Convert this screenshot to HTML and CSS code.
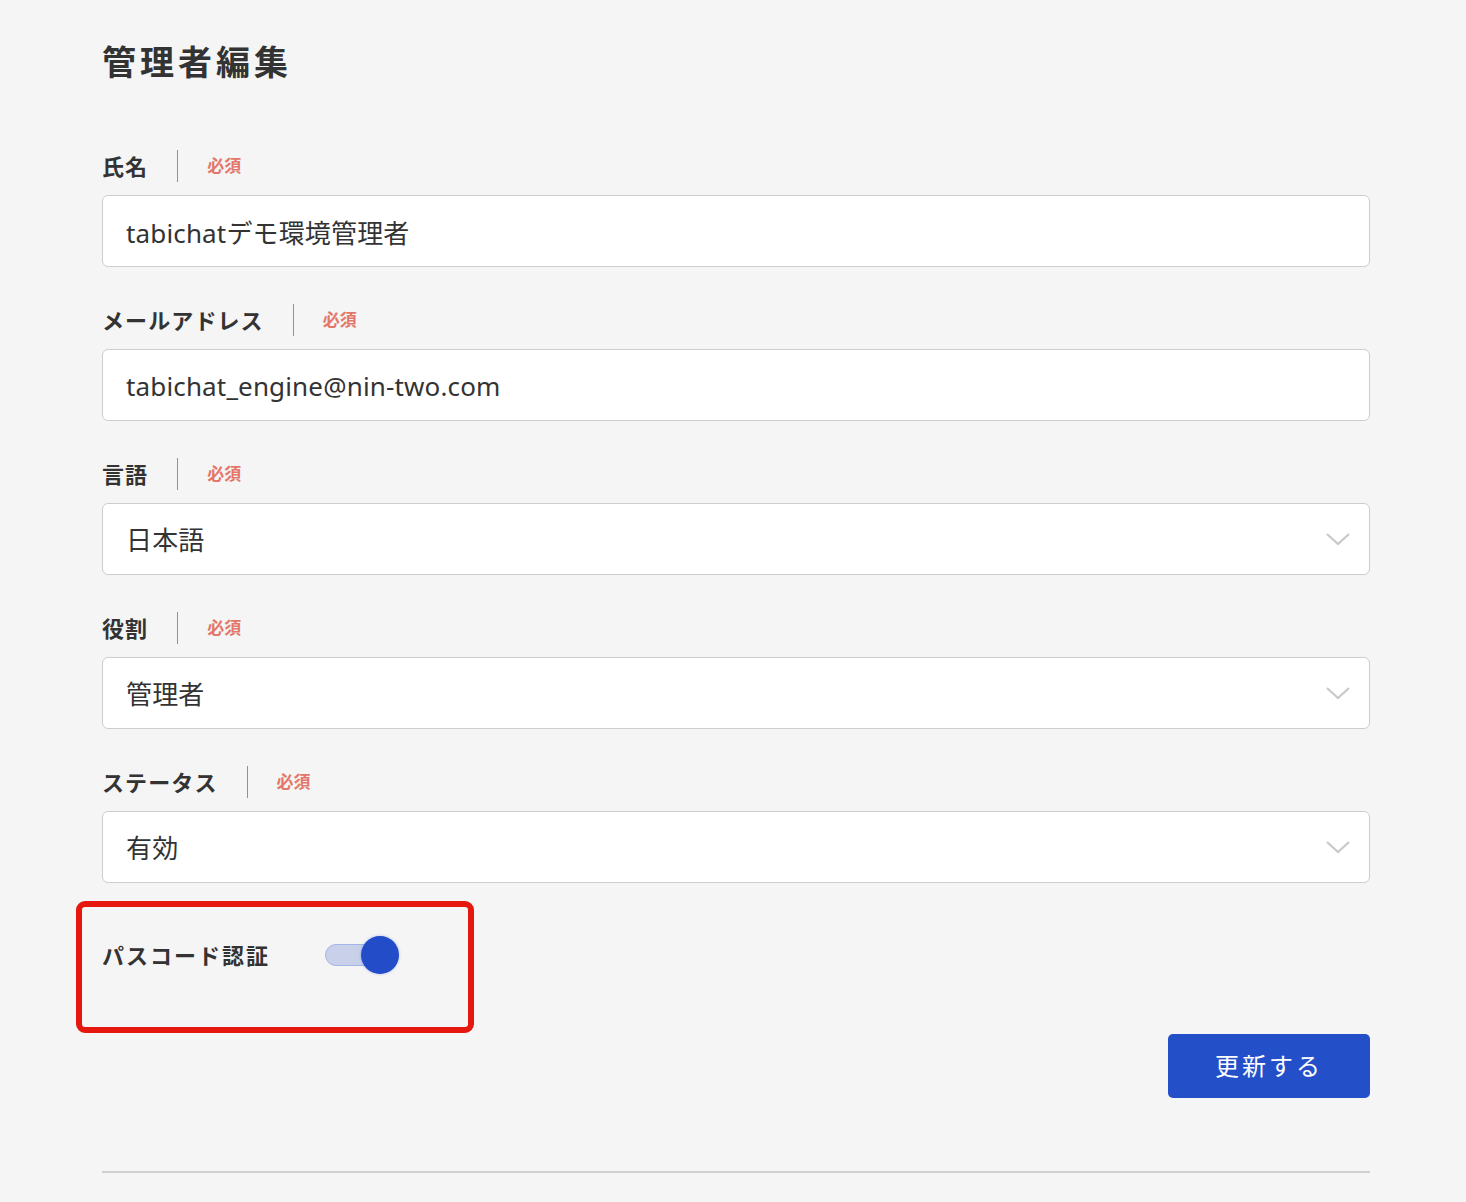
FILE: index.html
```html
<!DOCTYPE html>
<html lang="ja">
<head>
  <meta charset="UTF-8">
  <meta name="viewport" content="width=device-width, initial-scale=1">
  <title>管理者編集</title>
  <link rel="stylesheet" href="styles.css">
</head>
<body>
  <div class="page">
    <h1 class="title">管理者編集</h1>

    <div class="field">
      <div class="label-row">
        <span class="label">氏名</span>
        <span class="sep"></span>
        <span class="required">必須</span>
      </div>
      <div class="input">tabichatデモ環境管理者</div>
    </div>

    <div class="field">
      <div class="label-row">
        <span class="label">メールアドレス</span>
        <span class="sep"></span>
        <span class="required">必須</span>
      </div>
      <div class="input">tabichat_engine@nin-two.com</div>
    </div>

    <div class="field">
      <div class="label-row">
        <span class="label">言語</span>
        <span class="sep"></span>
        <span class="required">必須</span>
      </div>
      <div class="input select">
        <span>日本語</span>
        <svg class="chevron" width="26" height="16" viewBox="0 0 26 16"><polyline points="2,3 13,13 24,3" fill="none" stroke="#c9c9c9" stroke-width="2.2"/></svg>
      </div>
    </div>

    <div class="field">
      <div class="label-row">
        <span class="label">役割</span>
        <span class="sep"></span>
        <span class="required">必須</span>
      </div>
      <div class="input select">
        <span>管理者</span>
        <svg class="chevron" width="26" height="16" viewBox="0 0 26 16"><polyline points="2,3 13,13 24,3" fill="none" stroke="#c9c9c9" stroke-width="2.2"/></svg>
      </div>
    </div>

    <div class="field">
      <div class="label-row">
        <span class="label">ステータス</span>
        <span class="sep"></span>
        <span class="required">必須</span>
      </div>
      <div class="input select">
        <span>有効</span>
        <svg class="chevron" width="26" height="16" viewBox="0 0 26 16"><polyline points="2,3 13,13 24,3" fill="none" stroke="#c9c9c9" stroke-width="2.2"/></svg>
      </div>
    </div>

    <div class="passcode">
      <span class="label">パスコード認証</span>
      <div class="toggle">
        <span class="track"></span>
        <span class="knob"></span>
      </div>
      <div class="highlight"></div>
    </div>

    <div class="actions">
      <button class="submit">更新する</button>
    </div>

    <hr class="line">
  </div>
</body>
</html>
```

FILE: styles.css
```css
*{
  padding: 0;
  margin: 0;
  box-sizing: border-box;
}

body{
  background: #f5f5f5;
  color: #333;
  font-family: "Noto Sans", "Noto Sans CJK JP", sans-serif;
}

.page{
  width: 1268px;
  margin-left: 102px;
  padding-top: 38px;
  padding-bottom: 28px;
}

.title{
  font-size: 34px;
  line-height: 48px;
  font-weight: bold;
  letter-spacing: 4px;
  margin-bottom: 64px;
}

.field{
  margin-bottom: 37px;
}

.label-row{
  display: flex;
  align-items: center;
  height: 32px;
}

.label{
  font-size: 22px;
  font-weight: bold;
  letter-spacing: 1.1px;
  line-height: 30px;
}

.sep{
  width: 1px;
  height: 32px;
  background: #e4705f;
  margin: 0 29px 0 29px;
}

.required{
  font-size: 17px;
  font-weight: bold;
  line-height: 30px;
  color: #e3786a;
}

.input{
  margin-top: 13px;
  height: 72px;
  background: #fff;
  border: 1px solid #cdcdcd;
  border-radius: 6px;
  padding: 2px 18px 0 23px;
  font-size: 26px;
  letter-spacing: 0.15px;
  display: flex;
  align-items: center;
}

.select{
  justify-content: space-between;
  padding-top: 0;
}

.passcode{
  position: relative;
  display: flex;
  align-items: center;
  height: 40px;
  margin-top: 52px;
}

.passcode .label{
  letter-spacing: 2px;
}

.toggle{
  position: relative;
  width: 76px;
  height: 40px;
  margin-left: 55px;
}

.track{
  position: absolute;
  left: 0;
  top: 9px;
  width: 62px;
  height: 22px;
  border-radius: 11px;
  background: #c9d1ea;
  border: 1px solid #a3b4e8;
}

.knob{
  position: absolute;
  left: 36px;
  top: 1px;
  width: 38px;
  height: 38px;
  border-radius: 50%;
  background: #234dc8;
  box-shadow: 0 0 3px rgba(35, 77, 200, 0.35);
}

.highlight{
  position: absolute;
  left: -26px;
  top: -34px;
  width: 398px;
  height: 132px;
  border: 6px solid #e5170e;
  border-radius: 9px;
}

.actions{
  display: flex;
  justify-content: flex-end;
  margin-top: 59px;
}

.submit{
  width: 202px;
  height: 64px;
  padding-bottom: 4px;
  background: #234fc9;
  color: #fff;
  border: none;
  border-radius: 5px;
  font-family: "Noto Sans CJK JP", sans-serif;
  font-size: 24px;
  letter-spacing: 3px;
  cursor: pointer;
}

.line{
  margin-top: 73px;
  height: 2px;
  border: none;
  background: #cfcfcf;
}
```
